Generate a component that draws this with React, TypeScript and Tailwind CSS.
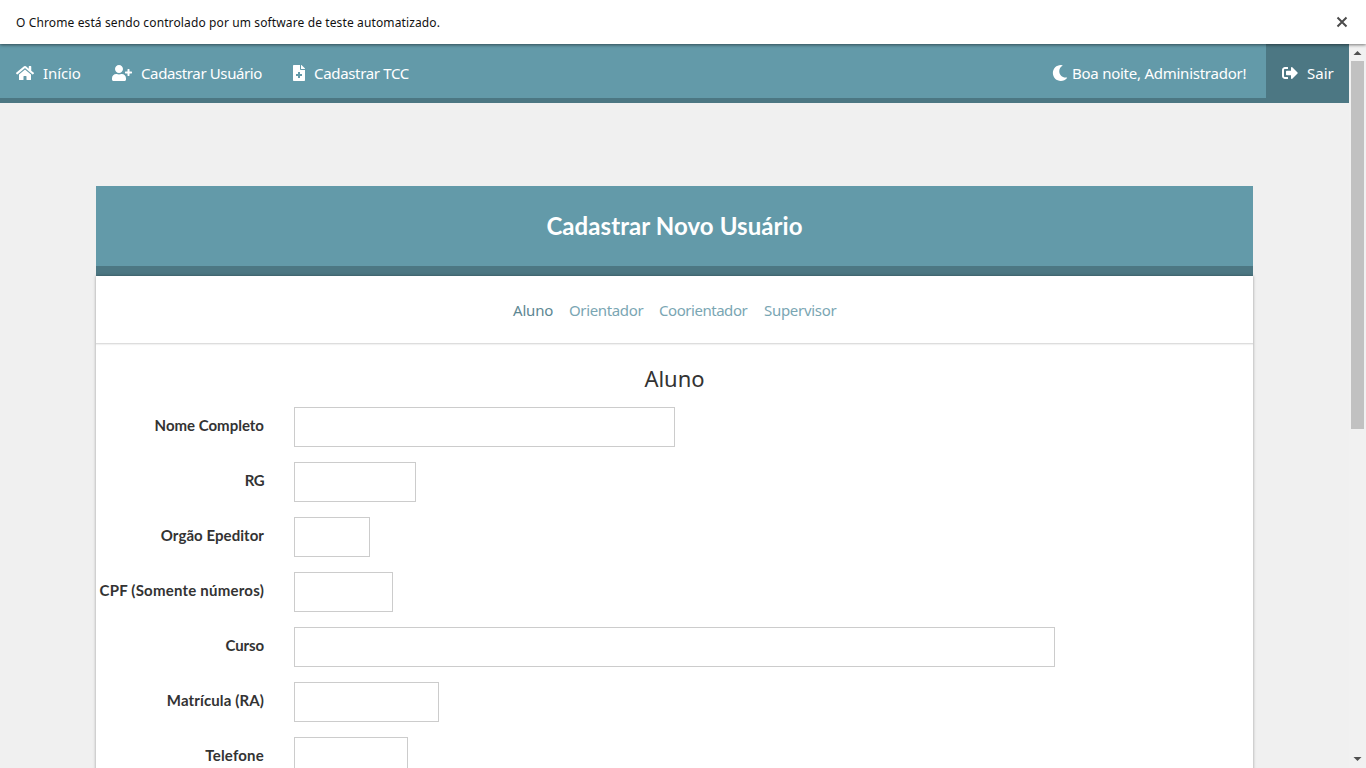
import type { ReactNode } from "react";
import { FaFileMedical, FaHome, FaMoon, FaSignOutAlt, FaUserPlus } from "react-icons/fa";

function NavItem({ icon, label, width, tracking }: { icon: ReactNode; label: string; width: string; tracking: string }) {
  return (
    <a href="#" className={`flex h-full shrink-0 items-center pl-4 ${width}`}>
      {icon}
      <span className={`ml-[9px] pt-px whitespace-nowrap ${tracking}`}>{label}</span>
    </a>
  );
}

const fields = [
  { label: "Nome Completo", width: "w-[381px]", tracking: "tracking-[0px]" },
  { label: "RG", width: "w-[122px]", tracking: "tracking-[-0.6px]" },
  { label: "Orgão Epeditor", width: "w-[76px]", tracking: "tracking-[0.06px]" },
  { label: "CPF (Somente números)", width: "w-[99px]", tracking: "tracking-[0.22px]" },
  { label: "Curso", width: "w-[761px]", tracking: "tracking-[-0.1px]" },
  { label: "Matrícula (RA)", width: "w-[145px]", tracking: "tracking-[0.12px]" },
  { label: "Telefone", width: "w-[114px]", tracking: "tracking-[0.2px]" },
];

const tabs = [
  { label: "Aluno", style: "w-10 tracking-[-0.2px] text-[#5d8793]" },
  { label: "Orientador", style: "w-[74px] tracking-[-0.36px] text-[#7aa6b3]" },
  { label: "Coorientador", style: "w-[89px] tracking-[-0.46px] text-[#7aa6b3]" },
  { label: "Supervisor", style: "w-[72px] tracking-[-0.3px] text-[#7aa6b3]" },
];

function InfoBar() {
  return (
    <div className="relative z-10 flex h-11 shrink-0 items-center justify-between bg-white pr-[18px] pl-4 shadow-[0_1px_3px_rgba(0,0,0,0.5)]">
      <span className="pt-0.5 text-[12px] tracking-[0.12px] text-[#111]">
        O Chrome está sendo controlado por um software de teste automatizado.
      </span>
      <svg width="12" height="12" viewBox="0 0 12 12" stroke="#4b4b4b" strokeWidth="2">
        <path d="M1.5 1.5l9 9M10.5 1.5l-9 9" />
      </svg>
    </div>
  );
}

function NavBar() {
  return (
    <nav className="flex h-[59px] shrink-0 text-[15px] text-white">
      <div className="flex flex-1 items-center border-b-5 border-[#4c7783] bg-[#639aa9] pt-1">
        <NavItem icon={<FaHome className="h-4 w-[18px]" />} label="Início" width="w-24" tracking="tracking-[-0.1px]" />
        <NavItem icon={<FaUserPlus className="h-4 w-5" />} label="Cadastrar Usuário" width="w-[181px]" tracking="tracking-[-0.38px]" />
        <NavItem icon={<FaFileMedical className="h-4 w-3" />} label="Cadastrar TCC" width="w-[148px]" tracking="tracking-[-0.33px]" />
        <div className="ml-auto flex w-[214px] items-center">
          <FaMoon className="size-4" />
          <span className="ml-1 pt-px whitespace-nowrap tracking-[-0.25px]">Boa noite, Administrador!</span>
        </div>
      </div>
      <a href="#" className="flex w-[83px] items-center bg-[#4c7783] pb-px pl-4">
        <FaSignOutAlt className="size-4" />
        <span className="ml-[9px] pt-px">Sair</span>
      </a>
    </nav>
  );
}

function ScrollBar() {
  return (
    <div className="flex w-[17px] shrink-0 flex-col items-center bg-[#f1f1f1]">
      <svg className="h-[17px] w-[17px] shrink-0" viewBox="0 0 17 17" fill="#505050">
        <path d="M4.5 11L8.5 7l4 4z" />
      </svg>
      <div className="h-[368px] w-[13px] bg-[#c1c1c1]" />
      <svg className="mt-auto h-[17px] w-[17px] shrink-0" viewBox="0 0 17 17" fill="#505050">
        <path d="M4.5 6l4 4 4-4z" />
      </svg>
    </div>
  );
}

export default function App() {
  return (
    <div className="flex h-screen flex-col overflow-hidden bg-[#f0f0f0] font-['Noto_Sans',sans-serif] text-[#333]">
      <InfoBar />
      <div className="flex min-h-0 flex-1">
        <div className="flex min-w-0 flex-1 flex-col overflow-hidden">
          <NavBar />
          <main className="mx-24 mt-[83px] shrink-0">
            <header className="flex h-[90px] items-center justify-center border-b-10 border-[#4c7783] bg-[#639aa9]">
              <h1 className="font-['Lato',sans-serif] text-[24px] font-bold tracking-[0.08px] text-white">Cadastrar Novo Usuário</h1>
            </header>
            <section className="h-[600px] bg-white shadow-[0_0_3px_rgba(0,0,0,0.35)]">
              <div className="flex h-[68px] items-center justify-center gap-4 border-b border-[#ddd] pt-0.5 shadow-[0_1px_1px_rgba(0,0,0,0.05)]">
                {tabs.map((t) => (
                  <a key={t.label} href="#" className={`text-[15px] whitespace-nowrap ${t.style}`}>
                    {t.label}
                  </a>
                ))}
              </div>
              <h2 className="mt-[17px] text-center text-[22px] leading-[34px]">Aluno</h2>
              <form className="mt-3 flex flex-col gap-[15px]">
                {fields.map((f) => (
                  <label key={f.label} className="flex h-10">
                    <span className={`mr-[30px] w-[168px] text-right font-['Lato',sans-serif] text-[15px] leading-9 font-bold whitespace-nowrap ${f.tracking}`}>
                      {f.label}
                    </span>
                    <input className={`h-10 border border-[#ccc] bg-white px-2 outline-none ${f.width}`} />
                  </label>
                ))}
              </form>
            </section>
          </main>
        </div>
        <ScrollBar />
      </div>
    </div>
  );
}
